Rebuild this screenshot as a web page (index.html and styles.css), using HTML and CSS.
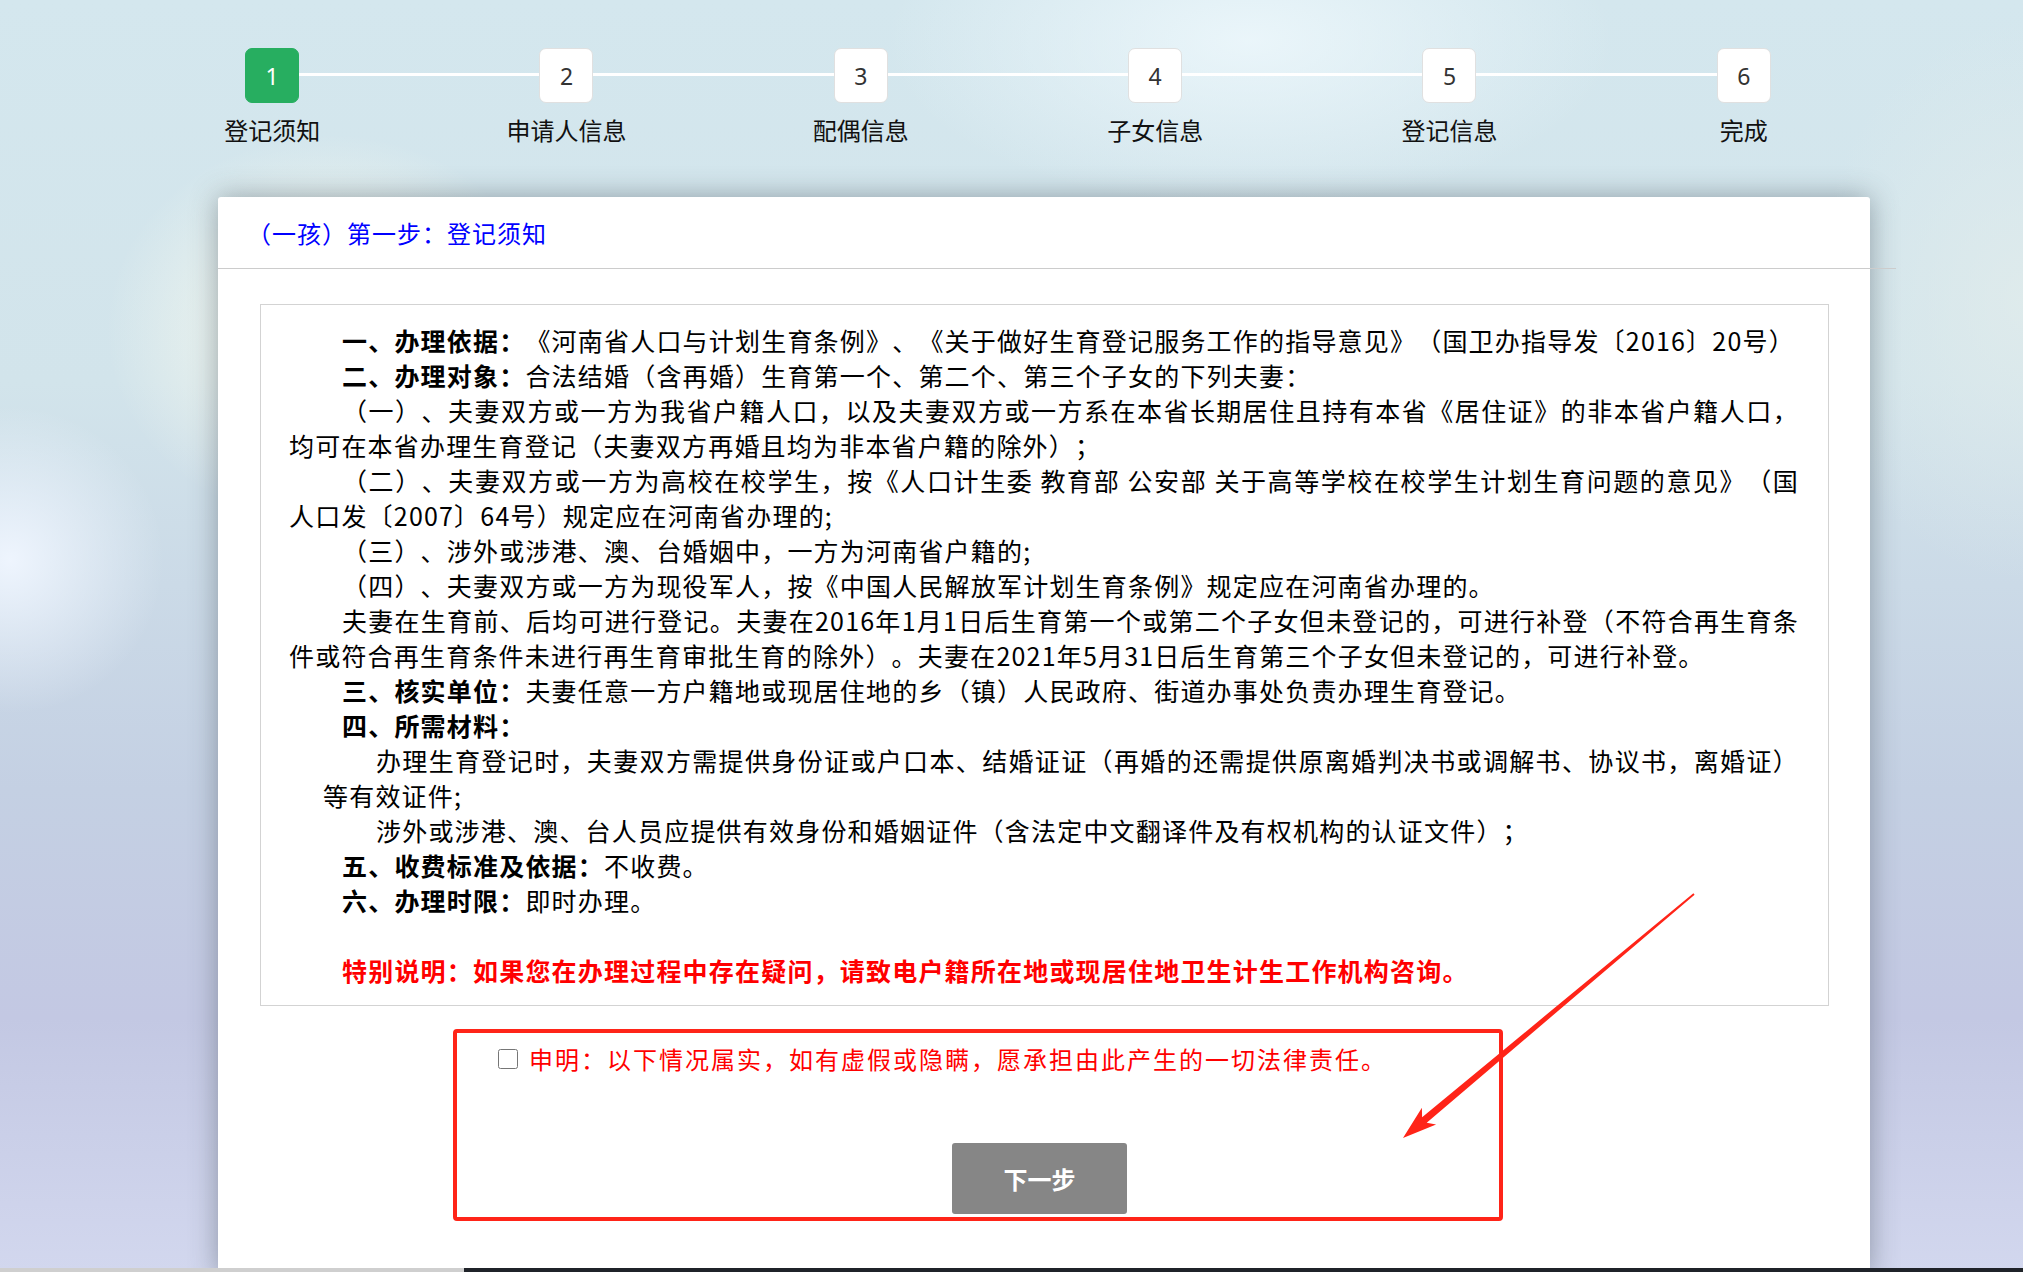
FILE: index.html
```html
<!DOCTYPE html>
<html lang="zh-CN">
<head>
<meta charset="utf-8">
<title>生育登记 - 登记须知</title>
<link rel="stylesheet" href="styles.css">
</head>
<body>
<div class="page">
  <div class="steps">
    <div class="step active"><div class="num">1</div><div class="label">登记须知</div></div>
    <div class="step"><div class="num">2</div><div class="label">申请人信息</div></div>
    <div class="step"><div class="num">3</div><div class="label">配偶信息</div></div>
    <div class="step"><div class="num">4</div><div class="label">子女信息</div></div>
    <div class="step"><div class="num">5</div><div class="label">登记信息</div></div>
    <div class="step"><div class="num">6</div><div class="label">完成</div></div>
  </div>

  <div class="card">
    <div class="card-head">（一孩）第一步：登记须知</div>
    <div class="notice">
      <p class="ind"><b>一、办理依据：</b>《河南省人口与计划生育条例》、《关于做好生育登记服务工作的指导意见》（国卫办指导发〔2016〕20号）</p>
      <p class="ind"><b>二、办理对象：</b>合法结婚（含再婚）生育第一个、第二个、第三个子女的下列夫妻：</p>
      <p class="ind">（一）、夫妻双方或一方为我省户籍人口，以及夫妻双方或一方系在本省长期居住且持有本省《居住证》的非本省户籍人口，均可在本省办理生育登记（夫妻双方再婚且均为非本省户籍的除外）；</p>
      <p class="ind">（二）、夫妻双方或一方为高校在校学生，按《人口计生委 教育部 公安部 关于高等学校在校学生计划生育问题的意见》（国人口发〔2007〕64号）规定应在河南省办理的;</p>
      <p class="ind">（三）、涉外或涉港、澳、台婚姻中，一方为河南省户籍的;</p>
      <p class="ind">（四）、夫妻双方或一方为现役军人，按《中国人民解放军计划生育条例》规定应在河南省办理的。</p>
      <p class="ind">夫妻在生育前、后均可进行登记。夫妻在2016年1月1日后生育第一个或第二个子女但未登记的，可进行补登（不符合再生育条件或符合再生育条件未进行再生育审批生育的除外）。夫妻在2021年5月31日后生育第三个子女但未登记的，可进行补登。</p>
      <p class="ind"><b>三、核实单位：</b>夫妻任意一方户籍地或现居住地的乡（镇）人民政府、街道办事处负责办理生育登记。</p>
      <p class="ind"><b>四、所需材料：</b></p>
      <p class="ind sub">办理生育登记时，夫妻双方需提供身份证或户口本、结婚证证（再婚的还需提供原离婚判决书或调解书、协议书，离婚证）等有效证件;</p>
      <p class="ind sub">涉外或涉港、澳、台人员应提供有效身份和婚姻证件（含法定中文翻译件及有权机构的认证文件）；</p>
      <p class="ind"><b>五、收费标准及依据：</b>不收费。</p>
      <p class="ind"><b>六、办理时限：</b>即时办理。</p>
      <p class="ind special">特别说明：如果您在办理过程中存在疑问，请致电户籍所在地或现居住地卫生计生工作机构咨询。</p>
    </div>

    <div class="declare">
      <label class="agree"><input type="checkbox" class="agree-box"><span>申明：以下情况属实，如有虚假或隐瞒，愿承担由此产生的一切法律责任。</span></label>
      <button class="next" type="button">下一步</button>
    </div>
  </div>

  <svg class="arrow" width="2023" height="1272" viewBox="0 0 2023 1272" aria-hidden="true">
    <polygon points="1693.4,893.2 1422.1,1117.3 1421.9,1107.7 1403,1138 1436.1,1124.5 1426.7,1122.7 1694.6,894.8" fill="#ff2418"/>
  </svg>
</div>
<div class="taskbar"></div>
</body>
</html>
```

FILE: styles.css
```css
* { box-sizing: border-box; }

html, body {
  margin: 0;
  padding: 0;
}

body {
  width: 2023px;
  height: 1272px;
  overflow: hidden;
  font-family: "Noto Sans CJK SC", "Microsoft YaHei", "Noto Sans", sans-serif;
  text-spacing-trim: space-all;
  color: #000;
  background:
    radial-gradient(ellipse 320px 280px at 330px 330px, rgba(253, 253, 240, 0.95), rgba(253, 253, 240, 0) 70%),
    radial-gradient(ellipse 220px 220px at 10px 560px, rgba(240, 246, 255, 0.95), rgba(240, 246, 255, 0) 70%),
    radial-gradient(ellipse 520px 240px at 1250px 40px, rgba(238, 248, 252, 0.85), rgba(238, 248, 252, 0) 70%),
    radial-gradient(ellipse 260px 380px at 1230px 560px, rgba(243, 246, 248, 0.75), rgba(243, 246, 248, 0) 70%),
    radial-gradient(ellipse 300px 400px at 2023px 300px, rgba(225, 236, 236, 0.8), rgba(225, 236, 236, 0) 70%),
    linear-gradient(180deg, #d4e7ee 0%, #d2e4eb 30%, #c4d0e3 62%, #c3c8e3 80%, #d2d7ee 100%);
}

.page {
  position: relative;
  height: 1268px;
  overflow: hidden;
}

/* ---------- steps ---------- */
.steps {
  position: relative;
  display: flex;
  width: 1766px;
  margin-left: 125px;
  padding-top: 48px;
}

.steps::before {
  content: "";
  position: absolute;
  left: 147px;
  right: 147px;
  top: 73px;
  height: 3px;
  background: #ffffff;
}

.step {
  position: relative;
  z-index: 1;
  flex: 1 1 0;
  display: flex;
  flex-direction: column;
  align-items: center;
}

.num {
  width: 54px;
  height: 55px;
  border: 1px solid #e0e0e0;
  border-radius: 7px;
  background: #ffffff;
  color: #333;
  font-family: "Noto Sans", "Liberation Sans", sans-serif;
  font-size: 23px;
  display: flex;
  align-items: center;
  justify-content: center;
}

.step.active .num {
  background: #27ae60;
  border-color: #27ae60;
  color: #ffffff;
}

.label {
  margin-top: 12px;
  font-size: 24px;
  line-height: 30px;
  color: #111;
}

/* ---------- card ---------- */
.card {
  margin-top: 52px;
  margin-left: 218px;
  width: 1652px;
  min-height: 1080px;
  background: #ffffff;
  border-radius: 3px 3px 0 0;
  box-shadow: 0 0 28px rgba(60, 70, 80, 0.45);
}

.card-head {
  height: 72px;
  margin-right: -26px;
  padding-left: 29px;
  border-bottom: 1px solid #cccccc;
  line-height: 71px;
  font-size: 24px;
  letter-spacing: 1px;
  color: #0000ff;
}

.notice {
  margin: 35px 41px 0 42px;
  padding: 18px 29px 17px 28px;
  border: 1px solid #d3d3d3;
  font-size: 25px;
  line-height: 35px;
  letter-spacing: 1.2px;
  text-align: justify;
}

.notice p {
  margin: 0;
}

.notice .ind {
  text-indent: 53px;
}

.notice .sub {
  margin-left: 34px;
}

.notice b {
  font-weight: 700;
}

.notice .special {
  margin-top: 35px;
  color: #ff0000;
  font-weight: 700;
}

/* ---------- declaration ---------- */
.declare {
  margin-top: 23px;
  margin-left: 235px;
  width: 1050px;
  padding: 8px 0 3px 0;
  border: 4px solid #ff2418;
  border-radius: 4px;
  display: flex;
  flex-direction: column;
  align-items: flex-start;
}

.agree {
  display: flex;
  align-items: center;
  padding-left: 41px;
  font-size: 24px;
  line-height: 35px;
  letter-spacing: 2px;
  color: #ff0000;
  cursor: pointer;
}

.agree-box {
  width: 20px;
  height: 20px;
  margin: 0 11px 0 0;
}

.next {
  margin-top: 67px;
  margin-left: 495px;
  width: 175px;
  height: 71px;
  border: none;
  border-radius: 3px;
  background: #868686;
  color: #ffffff;
  font-family: "Noto Sans CJK SC", "Microsoft YaHei", sans-serif;
  font-size: 24px;
  font-weight: 700;
  cursor: pointer;
}

/* ---------- annotation arrow ---------- */
.arrow {
  position: absolute;
  left: 0;
  top: 0;
  pointer-events: none;
}

/* ---------- bottom bar ---------- */
.taskbar {
  height: 4px;
  background: linear-gradient(to right, #cfcfcf 0, #cfcfcf 464px, #1f2329 464px, #1f2329 100%);
}
```
